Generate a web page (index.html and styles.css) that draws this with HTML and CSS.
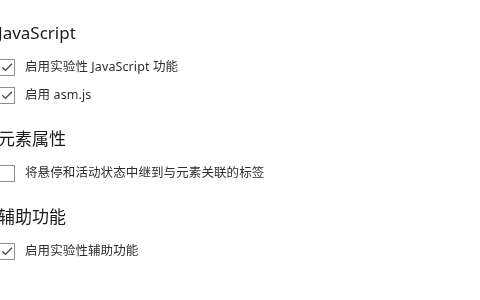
FILE: index.html
```html
<!DOCTYPE html>
<html lang="zh-CN">
<head>
<meta charset="utf-8">
<link rel="stylesheet" href="styles.css">
</head>
<body>
<div class="page">
  <section class="group">
    <h2 class="title">JavaScript</h2>
    <label class="row">
      <span class="box"><svg viewBox="0 0 16 16" width="16" height="16"><path d="M3.3 8.2 L6.5 11.4 L12.9 4.7" fill="none" stroke="#444" stroke-width="1.3"/></svg></span>
      <span class="text">启用实验性 JavaScript 功能</span>
    </label>
    <label class="row">
      <span class="box"><svg viewBox="0 0 16 16" width="16" height="16"><path d="M3.3 8.2 L6.5 11.4 L12.9 4.7" fill="none" stroke="#444" stroke-width="1.3"/></svg></span>
      <span class="text">启用 asm.js</span>
    </label>
  </section>
  <section class="group">
    <h2 class="title">元素属性</h2>
    <label class="row">
      <span class="box"></span>
      <span class="text">将悬停和活动状态中继到与元素关联的标签</span>
    </label>
  </section>
  <section class="group">
    <h2 class="title">辅助功能</h2>
    <label class="row">
      <span class="box"><svg viewBox="0 0 16 16" width="16" height="16"><path d="M3.3 8.2 L6.5 11.4 L12.9 4.7" fill="none" stroke="#444" stroke-width="1.3"/></svg></span>
      <span class="text">启用实验性辅助功能</span>
    </label>
  </section>
</div>
</body>
</html>
```
FILE: styles.css
```css
html, body {
  margin: 0;
  padding: 0;
  background: #ffffff;
  width: 480px;
  height: 300px;
  overflow: hidden;
}
.page {
  display: flex;
  flex-direction: column;
  gap: 20px;
  padding-top: 23px;
  margin-left: -2px;
  font-family: "Segoe UI", "Noto Sans", "Noto Sans CJK SC", sans-serif;
  filter: blur(0.55px);
}
.group {
  display: flex;
  flex-direction: column;
}
.title {
  margin: 0 0 10px 0;
  font-size: 17px;
  line-height: 20px;
  font-weight: 400;
  color: #1a1a1a;
}
.row {
  display: flex;
  align-items: center;
  height: 28px;
  gap: 10px;
}
.box {
  box-sizing: border-box;
  width: 17px;
  height: 17px;
  border: 1px solid #8e8e8e;
  background: #fff;
  display: flex;
  align-items: center;
  justify-content: center;
  flex: none;
}
.box svg {
  display: block;
  flex: none;
}
.text {
  font-size: 12.5px;
  line-height: 16px;
  color: #2e2e2e;
  letter-spacing: 0.1px;
}
```
